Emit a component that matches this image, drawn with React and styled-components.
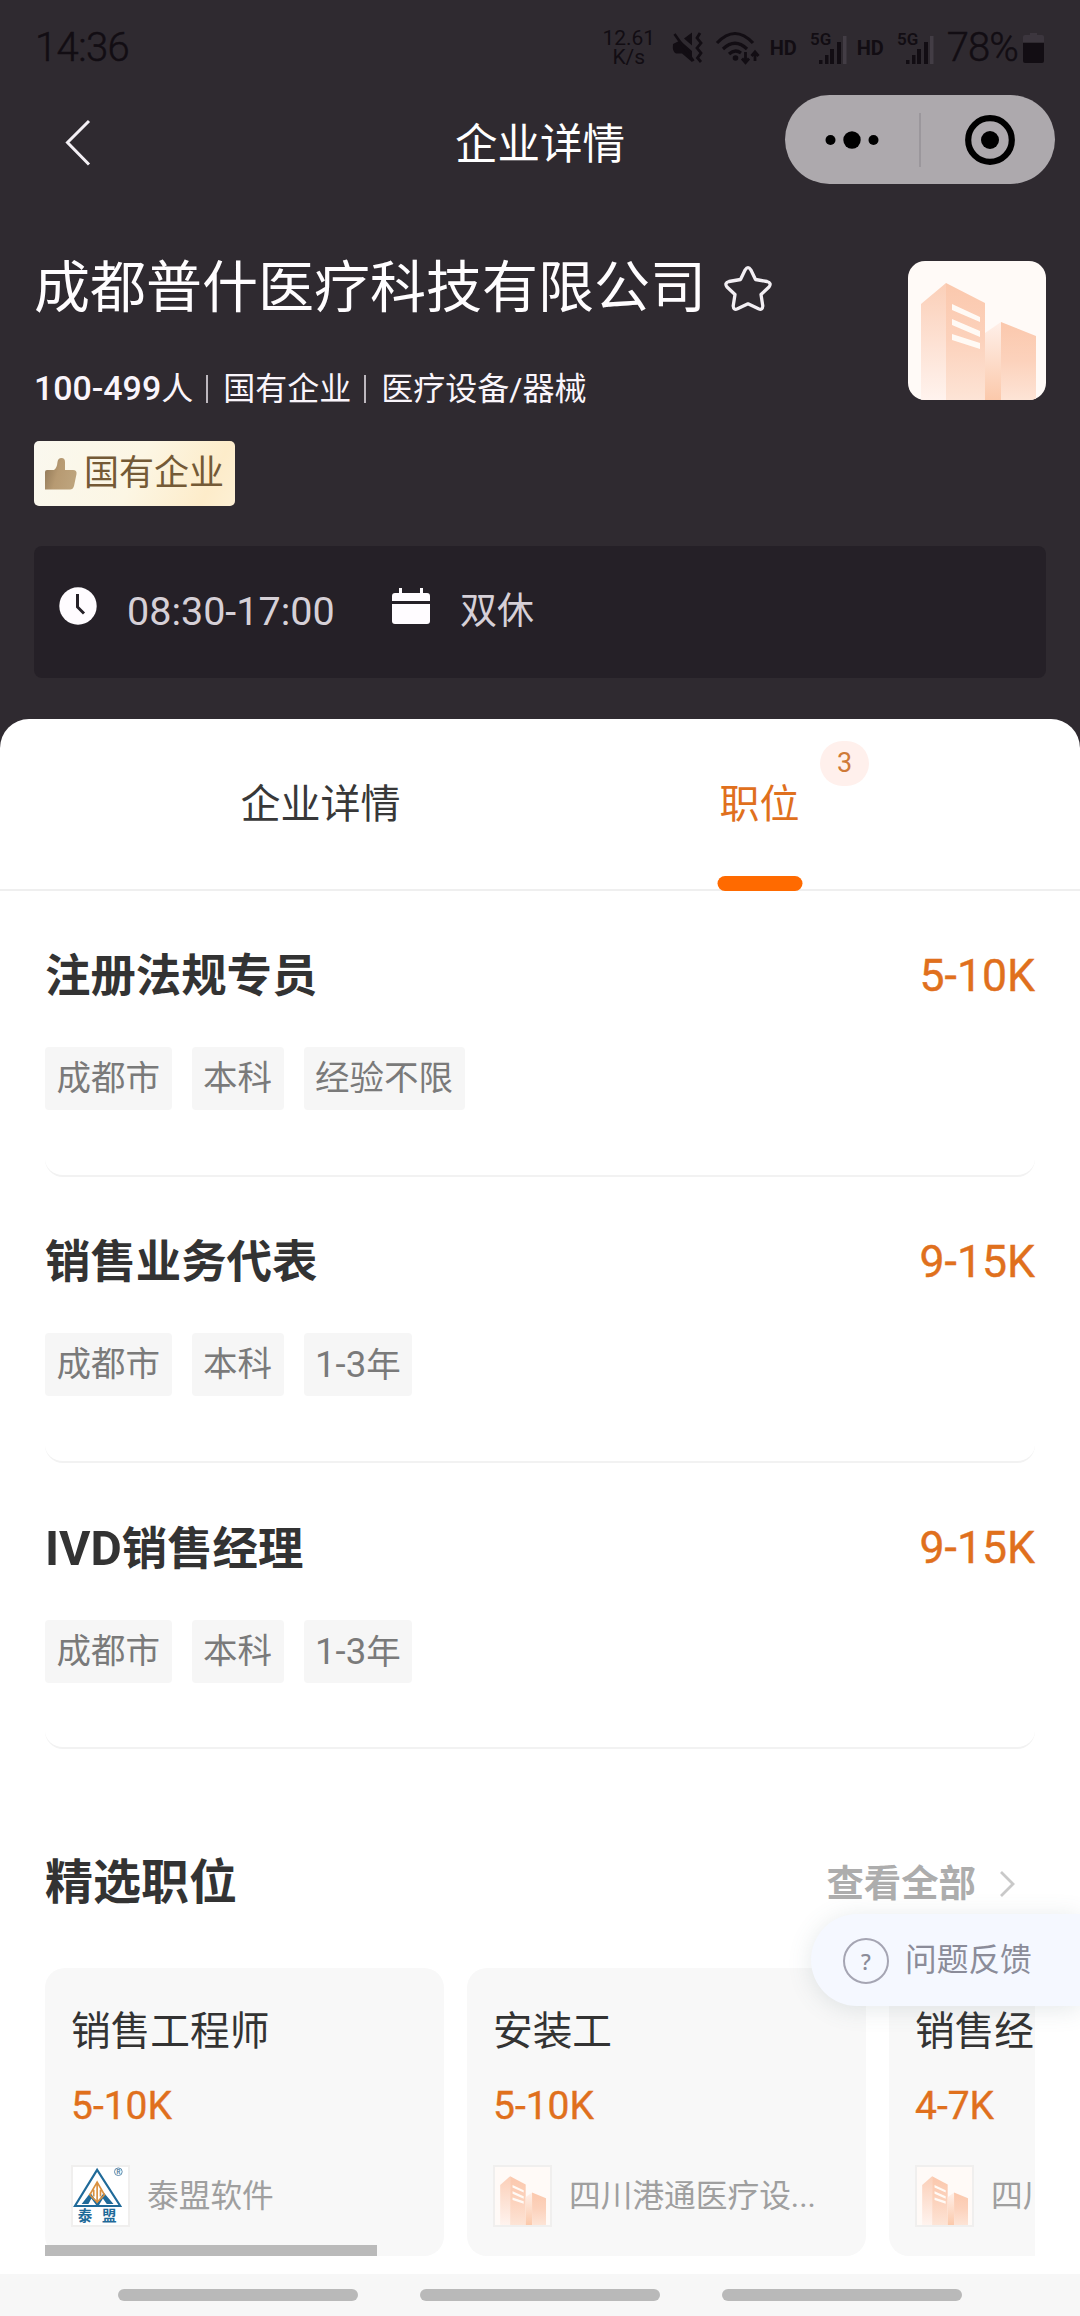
import React from "react";
import styled, { createGlobalStyle, css } from "styled-components";

const GlobalStyle = createGlobalStyle`
  * { box-sizing: border-box; }
  html, body { margin: 0; padding: 0; }
  body {
    font-family: Roboto, "Noto Sans CJK SC", sans-serif;
    background: #ffffff;
    -webkit-font-smoothing: antialiased;
  }
`;

const ink = "#120d13";
const orange = "#e0701d";

const Screen = styled.div`
  width: 1080px;
  height: 2316px;
  display: flex;
  flex-direction: column;
  background: #2f2a30;
  overflow: hidden;
`;

/* Latin runs are set slightly larger than the Chinese text beside them. */
const Latin = styled.span`
  font-size: 1.06em;
  font-weight: ${(p) => p.$weight || "inherit"};
`;

function Mixed({ children }) {
  return children
    .split(/([A-Za-z0-9-]+)/)
    .filter(Boolean)
    .map((part, i) => (/^[A-Za-z0-9-]+$/.test(part) ? <Latin key={i}>{part}</Latin> : part));
}

/* ---------- status bar ---------- */

const StatusBar = styled.header`
  height: 95px;
  padding: 0 36px 0 35px;
  display: flex;
  align-items: center;
  justify-content: space-between;
  color: ${ink};
`;

const StatusText = styled.span`
  font-size: 40px;
  line-height: 48px;
  padding-top: ${(p) => p.$drop || 0}px;
  font-weight: 300;
  -webkit-text-stroke: 0.5px ${ink};
  letter-spacing: ${(p) => p.$track || 0}px;
`;

const StatusIcons = styled.div`
  display: flex;
  align-items: center;
`;

const NetSpeed = styled.div`
  display: flex;
  flex-direction: column;
  align-items: center;
  width: 52px;
  margin-right: 17px;
  font-size: 21px;
  line-height: 19px;
`;

const HdLabel = styled.span`
  width: 29px;
  font-size: 20px;
  line-height: 24px;
  font-weight: 700;
  margin-right: ${(p) => p.$gap || 11}px;
`;

const StatusSvg = styled.svg`
  display: block;
  overflow: visible;
  margin-right: ${(p) => p.$gap || 0}px;
`;

const SignalText = styled.text`
  font: 600 17px Roboto, sans-serif;
`;

function MuteIcon() {
  return (
    <StatusSvg $gap={12} width="32" height="34" viewBox="0 0 32 34">
      <path d="M1 13 L8 9.500 L20 20 V31 L10 22.500 H4 Q0 21 1 13 Z M12 7.500 L20 1.500 V14.500 Z" fill={ink} />
      <path d="M2.500 3 L21.500 30" stroke={ink} strokeWidth="2.600" />
      <path d="M28 2 L25 7 L29 12 L25 17 L29 22 L25.500 27 L29 31" fill="none" stroke={ink} strokeWidth="2.800" />
    </StatusSvg>
  );
}

function WifiIcon() {
  return (
    <StatusSvg $gap={9} width="45" height="34" viewBox="0 0 45 34">
      <g fill="none" stroke={ink} strokeWidth="3.200">
        <path d="M1 12 Q19 -7 37 12" />
        <path d="M7 18 Q19 6.500 31 18" />
        <path d="M13 23 Q19 17.500 25 22" />
      </g>
      <circle cx="19.500" cy="27" r="2.800" fill={ink} />
      <path d="M29.500 21 V31 M26 27.500 L29.500 31.500 L33 27.500 M39 30 V21 M35.500 25 L39 21 L42.500 25" fill="none" stroke={ink} strokeWidth="2.800" />
    </StatusSvg>
  );
}

function SignalIcon({ gap }) {
  return (
    <StatusSvg $gap={gap} width="37" height="34" viewBox="0 0 37 34">
      <SignalText x="0" y="14" fill={ink}>5G</SignalText>
      <path d="M9 29h3.500v4H9z M15 24h3.500v9H15z M20 18h4v15h-4z M27 11h4v22h-4z" fill={ink} />
      <path d="M33 5h3.500v28H33z" fill="#433d45" />
    </StatusSvg>
  );
}

function BatteryIcon() {
  return (
    <StatusSvg $gap={0} width="21" height="32" viewBox="0 0 21 32">
      <path d="M7 1h7v2h5q2 0 2 2v5H0V5q0-2 2-2h5z" fill="#3c363e" />
      <path d="M0 11h21v18q0 2-2 2H2q-2 0-2-2z" fill={ink} />
    </StatusSvg>
  );
}

/* ---------- navigation ---------- */

const NavBar = styled.nav`
  height: 89px;
  display: grid;
  grid-template-columns: 295px 1fr 295px;
  align-items: center;
`;

const BackButton = styled.button`
  width: 44px;
  height: 60px;
  margin: 7px 0 0 56px;
  padding: 0;
  border: 0;
  background: none;
`;

const NavTitle = styled.h1`
  margin: 0;
  padding-top: 11px;
  text-align: center;
  font-size: 42.5px;
  line-height: 50px;
  font-weight: 400;
  color: #ffffff;
`;

const Capsule = styled.div`
  width: 270px;
  height: 89px;
  border-radius: 45px;
  background: #ada9ad;
  display: grid;
  grid-template-columns: 134px 2px 1fr;
  align-items: center;
  justify-items: center;
`;

const CapsuleDivider = styled.span`
  width: 2px;
  height: 54px;
  background: #9b979c;
`;

/* ---------- company header ---------- */

const Company = styled.section`
  padding: 76px 34px 0;
  height: 535px;
  display: flex;
  flex-direction: column;
`;

const CompanyTop = styled.div`
  display: flex;
  justify-content: space-between;
  align-items: flex-start;
`;

const NameRow = styled.div`
  display: flex;
  align-items: center;
  gap: 17px;
`;

const CompanyName = styled.h2`
  margin: 0;
  font-size: 56px;
  line-height: 56px;
  font-weight: 400;
  color: #fffdff;
`;

const Meta = styled.div`
  margin-top: 53px;
  display: flex;
  align-items: center;
  font-size: 32px;
  line-height: 40px;
  color: #faf5fb;
`;

const MetaDivider = styled.span`
  width: 2px;
  height: 28px;
  margin: 0 15px 0 13px;
  background: #bdb8be;
`;

const HonorBadge = styled.div`
  width: 201px;
  height: 65px;
  margin-top: 32px;
  padding: 0 0 0 11px;
  display: flex;
  align-items: center;
  gap: 7px;
  border-radius: 5px;
  background: linear-gradient(115deg, #faf8ef 0%, #fcf6e4 50%, #fdecca 85%, #fdf0d4 100%);
  font-size: 35px;
  line-height: 40px;
  white-space: nowrap;
  color: #745a36;
`;

const CompanyLogo = styled.div`
  width: 138px;
  height: 139px;
  margin-top: 1px;
  border-radius: 17px;
  overflow: hidden;
`;

const WorkTime = styled.div`
  height: 132px;
  margin-top: 40px;
  padding: 0 25px;
  display: flex;
  align-items: center;
  border-radius: 8px;
  background: #252027;
  line-height: 48px;
  color: #d6d0d7;
`;

const WorkIcon = styled.svg`
  display: block;
  margin-bottom: 12px;
`;

const WorkText = styled.span`
  font-size: ${(p) => p.$size}px;
  margin-left: 30px;
  width: ${(p) => (p.$width ? p.$width + "px" : "auto")};
`;

/* ---------- sheet ---------- */

const Sheet = styled.main`
  flex: none;
  height: 1555px;
  background: #ffffff;
  border-radius: 29px 29px 0 0;
`;

const Tabs = styled.div`
  height: 172px;
  padding: 0 101px;
  display: grid;
  grid-template-columns: 1fr 1fr;
  border-bottom: 2px solid #efefef;
`;

const Tab = styled.div`
  display: flex;
  align-items: center;
  justify-content: center;
  font-size: 40px;
  line-height: 48px;
  padding-top: 2px;
  color: #383838;
  ${(p) =>
    p.$active &&
    css`
      position: relative;
      color: ${orange};
      &::after {
        content: "";
        position: absolute;
        left: 50%;
        bottom: -2px;
        width: 85px;
        height: 15px;
        transform: translateX(-50%);
        border-radius: 8px;
        background: #ff6a00;
      }
    `}
`;

const TabCount = styled.span`
  position: absolute;
  top: 22px;
  left: 280px;
  width: 49px;
  height: 45px;
  border-radius: 23px;
  background: #fff0ec;
  color: #cf7a38;
  font-size: 27px;
  line-height: 45px;
  text-align: center;
`;

const Job = styled.article`
  height: 286px;
  margin: 0 45px;
  padding-top: 58px;
  border-bottom: 2px solid #f2f2f2;
  border-radius: 18px;
`;

const JobHead = styled.div`
  display: flex;
  justify-content: space-between;
  align-items: flex-start;
`;

const JobTitle = styled.h3`
  margin: 0;
  font-size: 45.4px;
  line-height: 56px;
  font-weight: 700;
  color: #333333;
`;

const Salary = styled.span`
  font-size: ${(p) => p.$size}px;
  line-height: ${(p) => p.$line}px;
  padding-top: 1px;
  color: ${orange};
  -webkit-text-stroke: 0.4px ${orange};
`;

const Tags = styled.div`
  margin-top: 42px;
  display: flex;
  gap: 20px;
`;

const Tag = styled.span`
  height: 63px;
  padding: 0 11.5px;
  border-radius: 4px;
  background: #f6f6f6;
  font-size: 34.5px;
  line-height: 63px;
  color: #7a7a7a;
`;

const FeaturedHead = styled.div`
  height: 60px;
  margin: 104px 65px 0 45px;
  display: flex;
  align-items: center;
  justify-content: space-between;
`;

const FeaturedTitle = styled.h3`
  margin: 0;
  font-size: 48px;
  line-height: 60px;
  font-weight: 700;
  color: #333333;
`;

const ViewAll = styled.a`
  display: flex;
  align-items: center;
  gap: 23px;
  padding-top: 2px;
  font-size: 37.4px;
  line-height: 60px;
  font-weight: 700;
  color: #adadad;
`;

const Carousel = styled.div`
  position: relative;
  height: 288px;
  margin: 55px 45px 0 45px;
  display: flex;
  gap: 23px;
  overflow: hidden;
`;

const ScrollThumb = styled.span`
  position: absolute;
  left: 0;
  bottom: 0;
  width: 332px;
  height: 11px;
  background: #bababa;
`;

const Card = styled.article`
  flex: none;
  width: 399px;
  height: 288px;
  padding: 40px 26px 0;
  border-radius: 20px;
  background: #f8f8f8;
`;

const CardTitle = styled.h4`
  margin: 0 0 25px;
  font-size: 39.700px;
  line-height: 48px;
  font-weight: 400;
  color: #333333;
`;

const CardCompany = styled.div`
  margin-top: 35px;
  display: flex;
  align-items: center;
  gap: 17px;
  height: 61px;
`;

const CardLogo = styled.div`
  flex: none;
  width: 59px;
  height: 62px;
  border: 2px solid #f0efee;
  background: #ffffff;
  overflow: hidden;
`;

const CompanyLabel = styled.span`
  padding-top: 2px;
  font-size: 31.7px;
  line-height: 40px;
  color: #9f9f9f;
  white-space: nowrap;
`;

const Feedback = styled.button`
  position: absolute;
  right: 0;
  top: 1914px;
  width: 269px;
  height: 92px;
  padding: 0 0 0 32px;
  display: flex;
  align-items: center;
  gap: 16px;
  border: 0;
  border-radius: 46px 0 0 46px;
  background: #f5f8ff;
  box-shadow: 0 3px 24px rgba(90, 110, 120, 0.16);
  font: 400 31.7px/40px Roboto, "Noto Sans CJK SC", sans-serif;
  color: #8b8c99;
`;

const FeedbackLabel = styled.span`
  padding-top: 2px;
`;

const QuestionMark = styled.span`
  width: 46px;
  height: 46px;
  margin-top: 1px;
  border: 2px solid #a5a5b3;
  border-radius: 50%;
  font: 500 22px/43px "Noto Sans", sans-serif;
  text-align: center;
`;

const SystemNav = styled.footer`
  height: 42px;
  flex: none;
  display: flex;
  justify-content: center;
  gap: 62px;
  padding-top: 15px;
  background: #f7f7f7;
`;

const NavPill = styled.span`
  width: 240px;
  height: 12px;
  border-radius: 6px;
  background: #b9b9b9;
`;

const LogoText = styled.text`
  font: 700 ${(p) => p.$size}px "Noto Sans CJK SC", sans-serif;
`;

const FillSvg = styled.svg`
  display: block;
  width: 100%;
  height: 100%;
`;

function Building({ id }) {
  return (
    <FillSvg viewBox="0 0 138 139" preserveAspectRatio="none">
      <defs>
        <linearGradient id={id + "a"} x1="0" y1="0" x2="0" y2="1">
          <stop offset="0" stopColor="#fbcfb8" />
          <stop offset="1" stopColor="#fff3ee" />
        </linearGradient>
        <linearGradient id={id + "b"} x1="0" y1="0" x2="0" y2="1">
          <stop offset="0" stopColor="#fbc8ad" />
          <stop offset="0.5" stopColor="#fcd2bc" />
          <stop offset="1" stopColor="#fde4d6" />
        </linearGradient>
        <linearGradient id={id + "c"} x1="0" y1="0" x2="0" y2="1">
          <stop offset="0" stopColor="#fff0e9" />
          <stop offset="1" stopColor="#fbc9ab" />
        </linearGradient>
      </defs>
      <rect width="138" height="139" fill="#fffaf7" />
      <path d="M13 43 L38 22 V139 H13 Z" fill={`url(#${id}a)`} />
      <path d="M38 22 L77 42 V139 H38 Z" fill={`url(#${id}b)`} />
      <path d="M77 72 L93 61 V139 H77 Z" fill={`url(#${id}c)`} />
      <path d="M93 61 L128 75 V139 H93 Z" fill={`url(#${id}b)`} />
      <path d="M44 43 L72 56 V61 L44 49 Z M44 58 L72 70 V76 L44 64 Z M44 73 L72 82 V88 L44 79 Z" fill="#fffaf5" />
    </FillSvg>
  );
}

function TaimengLogo() {
  return (
    <FillSvg viewBox="0 0 57 61" preserveAspectRatio="none">
      <path d="M25 3 L49 41 H2 Z" fill="none" stroke="#1f6a99" strokeWidth="2.200" />
      <path d="M9 39 L18 27 L25 37 L32 27 L42 39 L35 39 L31 33 L27 40 H24 L19 33 L16 39 Z" fill="#1f6a99" />
      <path d="M17 30 L25 16 L33 30 M25 16 V38 M18 30 L25 37 L32 30 M21.500 24 V31 M28.500 24 V31" fill="none" stroke="#d9903f" strokeWidth="1.700" />
      <LogoText x="5" y="57" $size={15} fill="#1f6a99">泰</LogoText>
      <LogoText x="30" y="57" $size={15} fill="#1f6a99">盟</LogoText>
      <circle cx="47" cy="5" r="4" fill="none" stroke="#5b87a8" strokeWidth="1" />
      <LogoText x="44.900" y="7.400" $size={6.5} fill="#5b87a8">R</LogoText>
    </FillSvg>
  );
}

const jobs = [
  { title: "注册法规专员", salary: "5-10K", tags: ["成都市", "本科", "经验不限"] },
  { title: "销售业务代表", salary: "9-15K", tags: ["成都市", "本科", "1-3年"] },
  { title: "IVD销售经理", salary: "9-15K", tags: ["成都市", "本科", "1-3年"] },
];

const featured = [
  { title: "销售工程师", salary: "5-10K", company: "泰盟软件", logo: <TaimengLogo /> },
  { title: "安装工", salary: "5-10K", company: "四川港通医疗设...", logo: <Building id="m" /> },
  { title: "销售经理", salary: "4-7K", company: "四川港通医疗设...", logo: <Building id="n" /> },
];

export default function App() {
  return (
    <>
      <GlobalStyle />
      <Screen>
        <StatusBar>
          <StatusText $track={-0.6} $drop={1}>14:36</StatusText>
          <StatusIcons>
            <NetSpeed>
              <span>12.61</span>
              <span>K/s</span>
            </NetSpeed>
            <MuteIcon />
            <WifiIcon />
            <HdLabel>HD</HdLabel>
            <SignalIcon gap={10} />
            <HdLabel>HD</HdLabel>
            <SignalIcon gap={13} />
            <StatusText $track={-0.9}>78%</StatusText>
            <StatusSvg width="5" height="32" />
            <BatteryIcon />
          </StatusIcons>
        </StatusBar>

        <NavBar>
          <BackButton aria-label="返回">
            <svg width="44" height="60" viewBox="0 0 44 60">
              <path d="M33 8 L11.500 29.500 L33 51.500" fill="none" stroke="#f4f0f5" strokeWidth="3" />
            </svg>
          </BackButton>
          <NavTitle>企业详情</NavTitle>
          <Capsule>
            <svg width="60" height="30" viewBox="0 0 60 30">
              <circle cx="8.500" cy="15" r="5" />
              <circle cx="30" cy="15" r="8.700" />
              <circle cx="51.500" cy="15" r="5" />
            </svg>
            <CapsuleDivider />
            <svg width="56" height="52" viewBox="0 0 56 52">
              <circle cx="30" cy="26" r="21.800" fill="none" stroke="#000" strokeWidth="6.200" />
              <circle cx="30" cy="26" r="9" />
            </svg>
          </Capsule>
        </NavBar>

        <Company>
          <CompanyTop>
            <div>
              <NameRow>
                <CompanyName>成都普什医疗科技有限公司</CompanyName>
                <svg width="50" height="50" viewBox="0 0 50 50">
                  <path
                    d="M22.200 6.800 Q25 2.500 27.800 6.800 L32.500 16.500 L44 18.500 Q49 20 46 24 L38 31.500 L39.800 43 Q39.500 47.500 35.500 45.800 L25 40.800 L14.500 45.800 Q10.500 47.500 10.200 43 L12 31.500 L4 24 Q1 20 6 18.500 L17.500 16.500 Z"
                    fill="none"
                    stroke="#f3eff4"
                    strokeWidth="3.300"
                    strokeLinejoin="round"
                  />
                </svg>
              </NameRow>
              <Meta>
                <Latin $weight={500}>100-499</Latin>人
                <MetaDivider />
                国有企业
                <MetaDivider />
                医疗设备/器械
              </Meta>
              <HonorBadge>
                <svg width="32" height="34" viewBox="0 0 32 34">
                  <defs>
                    <linearGradient id="thumb" x1="0" y1="0" x2="1" y2="0.300">
                      <stop offset="0" stopColor="#8d7554" />
                      <stop offset="0.500" stopColor="#b79a72" />
                      <stop offset="1" stopColor="#bda37c" />
                    </linearGradient>
                  </defs>
                  <path
                    d="M0 15 Q0 13 2 13 H9 Q12 11 12.500 5 Q13 1 16.500 1 Q20 1 20 5 V13 H28 Q32 13 31.500 17 L29 29 Q28 32.500 25 32.500 H0 Z"
                    fill="url(#thumb)"
                  />
                </svg>
                国有企业
              </HonorBadge>
            </div>
            <CompanyLogo>
              <Building id="h" />
            </CompanyLogo>
          </CompanyTop>
          <WorkTime>
            <WorkIcon width="38" height="38" viewBox="0 0 38 38">
              <circle cx="19" cy="19" r="18.700" fill="#fffcff" />
              <path d="M18.500 7 V20 L25 26.500" fill="none" stroke="#252027" strokeWidth="3" />
            </WorkIcon>
            <WorkText $size={39.5} $width={265}>08:30-17:00</WorkText>
            <WorkIcon width="38" height="38" viewBox="0 0 38 38">
              <path d="M7 1h3v5h18V1h3v5h4q3 0 3 3v5H0V9q0-3 3-3h4z" fill="#fffcff" />
              <path d="M0 17h38v17q0 3-3 3H3q-3 0-3-3z" fill="#fffcff" />
            </WorkIcon>
            <WorkText $size={37}>双休</WorkText>
          </WorkTime>
        </Company>

        <Sheet>
          <Tabs>
            <Tab>企业详情</Tab>
            <Tab $active>
              职位
              <TabCount>3</TabCount>
            </Tab>
          </Tabs>
          {jobs.map((job) => (
            <Job key={job.title}>
              <JobHead>
                <JobTitle>
                  <Mixed>{job.title}</Mixed>
                </JobTitle>
                <Salary $size={44.6} $line={52}>{job.salary}</Salary>
              </JobHead>
              <Tags>
                {job.tags.map((tag) => (
                  <Tag key={tag}>
                    <Mixed>{tag}</Mixed>
                  </Tag>
                ))}
              </Tags>
            </Job>
          ))}
          <FeaturedHead>
            <FeaturedTitle>精选职位</FeaturedTitle>
            <ViewAll>
              查看全部
              <svg width="16" height="28" viewBox="0 0 16 28">
                <path d="M2 2 L14 14 L2 26" fill="none" stroke="#c9c9c9" strokeWidth="2.800" />
              </svg>
            </ViewAll>
          </FeaturedHead>
          <Carousel>
            {featured.map((item) => (
              <Card key={item.title}>
                <CardTitle>{item.title}</CardTitle>
                <Salary as="div" $size={39} $line={48}>{item.salary}</Salary>
                <CardCompany>
                  <CardLogo>{item.logo}</CardLogo>
                  <CompanyLabel>{item.company}</CompanyLabel>
                </CardCompany>
              </Card>
            ))}
            <ScrollThumb />
          </Carousel>
        </Sheet>

        <SystemNav>
          <NavPill />
          <NavPill />
          <NavPill />
        </SystemNav>
        <Feedback>
          <QuestionMark>?</QuestionMark>
          <FeedbackLabel>问题反馈</FeedbackLabel>
        </Feedback>
      </Screen>
    </>
  );
}
